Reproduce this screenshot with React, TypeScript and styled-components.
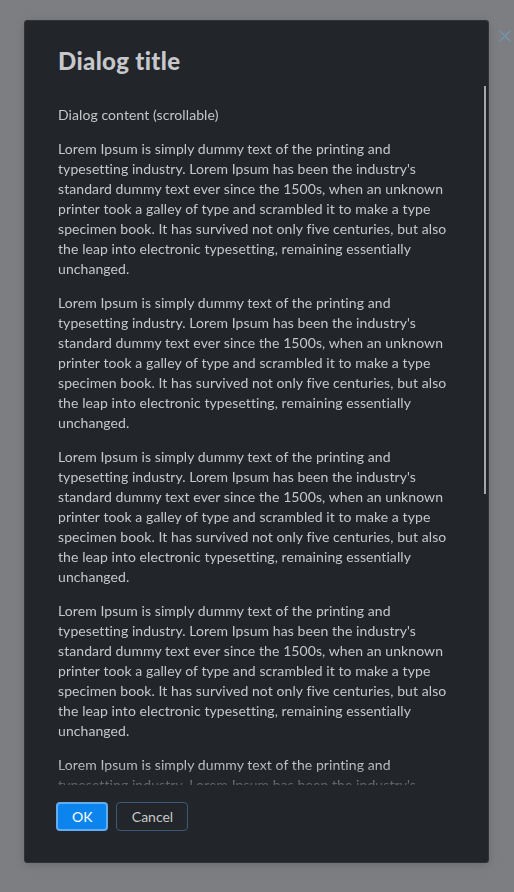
import React from "react";
import styled, { createGlobalStyle } from "styled-components";

const Global = createGlobalStyle`
  html, body {
    margin: 0;
    padding: 0;
    background: #7c7e82;
  }
  body {
    font-family: Lato, "Noto Sans", sans-serif;
  }
`;

const Backdrop = styled.div`
  position: relative;
  box-sizing: border-box;
  width: 514px;
  height: 892px;
  padding: 20px 0 0 24px;
  background: #7c7e82;
  overflow: hidden;
`;

const Dialog = styled.div`
  box-sizing: border-box;
  width: 465px;
  height: 843px;
  display: flex;
  flex-direction: column;
  background: #222529;
  border: 1px solid #2f3338;
  border-radius: 3px;
  box-shadow: 0 2px 10px rgba(0, 0, 0, 0.15);
`;

const Header = styled.div`
  padding: 26px 33px 11px 33px;
`;

const Title = styled.h2`
  margin: 0;
  font-family: Lato, "Noto Sans", sans-serif;
  font-weight: 900;
  font-size: 24px;
  line-height: 28px;
  letter-spacing: 0.35px;
  color: #c6c8cb;
`;

const ScrollWrap = styled.div`
  position: relative;
  flex: 1;
  min-height: 0;
  display: flex;
`;

const Scroll = styled.div`
  flex: 1;
  min-height: 0;
  overflow-y: auto;
  scrollbar-width: none;
  padding: 19px 35px 0 33px;
  -webkit-mask-image: linear-gradient(to bottom, #000 calc(100% - 22px), rgba(0,0,0,0.35) 100%);
  mask-image: linear-gradient(to bottom, #000 calc(100% - 22px), rgba(0,0,0,0.35) 100%);
  &::-webkit-scrollbar {
    display: none;
  }
`;

const Thumb = styled.div`
  position: absolute;
  top: 0;
  right: 2px;
  width: 2px;
  height: 408px;
  background: #a6a8ab;
`;

const Para = styled.p`
  margin: 0 0 14px 0;
  font-size: 14px;
  line-height: 20px;
  letter-spacing: 0.08px;
  color: #c5c7ca;
`;

const Footer = styled.div`
  display: flex;
  gap: 8px;
  padding: 17px 33px 31px 31px;
`;

const Button = styled.button<{ $primary?: boolean }>`
  box-sizing: border-box;
  height: 29px;
  padding: 0 14px;
  min-width: ${(p) => (p.$primary ? "52px" : "72px")};
  font-family: Lato, "Noto Sans", sans-serif;
  font-size: 14px;
  border-radius: 4px;
  cursor: pointer;
  border: ${(p) => (p.$primary ? "2px solid #62acef" : "1px solid #3b5a79")};
  background: ${(p) => (p.$primary ? "#0b84ee" : "transparent")};
  color: ${(p) => (p.$primary ? "#ffffff" : "#c6c8cb")};
`;

const CloseButton = styled.button`
  position: absolute;
  top: 29px;
  right: 2px;
  width: 14px;
  height: 14px;
  padding: 0;
  border: none;
  background: transparent;
  display: flex;
  align-items: center;
  justify-content: center;
  cursor: pointer;
`;

const lorem =
  "Lorem Ipsum is simply dummy text of the printing and typesetting industry. Lorem Ipsum has been the industry's standard dummy text ever since the 1500s, when an unknown printer took a galley of type and scrambled it to make a type specimen book. It has survived not only five centuries, but also the leap into electronic typesetting, remaining essentially unchanged.";

export default function App() {
  const paras = Array.from({ length: 8 }, (_, i) => i);
  return (
    <>
      <Global />
      <Backdrop>
        <Dialog role="dialog">
          <Header>
            <Title>Dialog title</Title>
          </Header>
          <ScrollWrap>
            <Scroll>
              <Para>Dialog content (scrollable)</Para>
              {paras.map((i) => (
                <Para key={i}>{lorem}</Para>
              ))}
            </Scroll>
            <Thumb />
          </ScrollWrap>
          <Footer>
            <Button $primary>OK</Button>
            <Button>Cancel</Button>
          </Footer>
        </Dialog>
        <CloseButton aria-label="Close">
          <svg width="12" height="12" viewBox="0 0 12 12">
            <path d="M1 1 L11 11 M11 1 L1 11" stroke="#7592ab" strokeWidth="1.6" strokeLinecap="round" />
          </svg>
        </CloseButton>
      </Backdrop>
    </>
  );
}
